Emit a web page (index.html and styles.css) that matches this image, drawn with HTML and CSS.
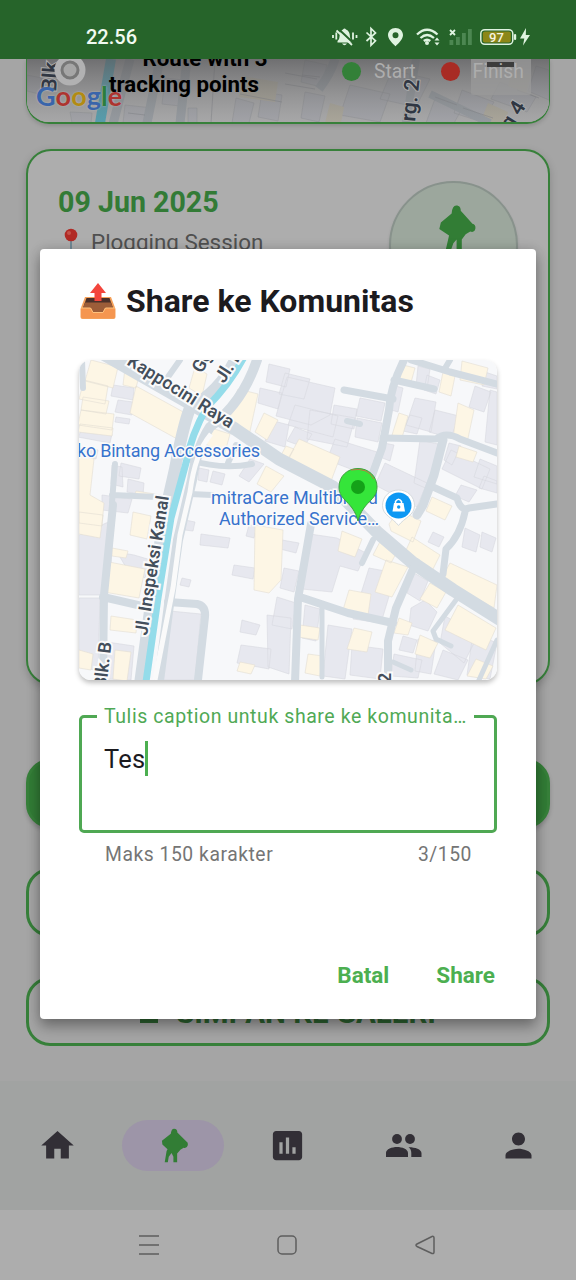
FILE: index.html
```html
<!DOCTYPE html>
<html lang="id">
<head>
<meta charset="utf-8">
<title>Share ke Komunitas</title>
<link rel="stylesheet" href="styles.css">
</head>
<body>
<div class="screen">
  <header class="status">
    <span class="clock">22.56</span>
    <svg class="status-icons" viewBox="330 24 204 28">
      <g fill="#dff3e0" stroke="none">
        <path d="M337.500 42.500V41q2-1.500 2-4 0-6 3.500-7.500 1.500-2 3 0 4 1.500 4 7.500 0 3 2 4v1.500zM342 43.500h5q-2.500 3.500-5 0z"/>
        <path d="M395.500 28c-4.500 0-7.500 3.200-7.500 7.300 0 4.700 7.500 10.900 7.500 10.900s7.500-6.200 7.500-10.900c0-4.100-3-7.300-7.500-7.300zm0 10.200a3 3 0 1 1 0-6 3 3 0 0 1 0 6z" fill-rule="evenodd"/>
        <circle cx="427" cy="43" r="2"/>
        <path d="M434.500 40.500h5l-2.500-3zM434.500 42.500h5l-2.500 3z"/>
        <path d="M526 28l-6 10.500h4.300l-1.300 7 7-10.500h-4.200z"/>
        <rect x="514" y="34" width="2.200" height="6" rx="1"/>
      </g>
      <path d="M338.500 29l16 15" stroke="#26642a" stroke-width="2"/>
      <g fill="none" stroke="#dff3e0" stroke-width="1.800">
        <path d="M336.500 30.500l15.500 14.500M333 35v3M336.300 32.500v7M353 32.500v7M356.500 35v3"/>
        <path d="M366.500 32.500l9 8.300-4.500 4.500V28.500l4.500 4.500-9 8" stroke-width="1.700"/>
        <path d="M417 34.500q10-9.500 20.500 0M420.500 38q6.500-6 13.500 0M423.800 41q3.200-2.600 6.500 0" stroke-width="2.300"/>
        <path d="M450 30l5 5M455 30l-5 5"/>
      </g>
      <g fill="#4c8751"><rect x="449.500" y="40" width="3.800" height="5"/><rect x="456" y="37" width="3.800" height="8"/><rect x="462" y="33" width="3.800" height="12"/><rect x="468" y="29" width="3.800" height="16"/></g>
      <rect x="480.800" y="29.700" width="32" height="14.600" rx="4" fill="#26642a" stroke="#dff3e0" stroke-width="1.500"/>
      <rect x="482.800" y="31.500" width="28" height="11" rx="2" fill="#8c8718"/>
      <text x="496.500" y="41.700" class="battery">97</text>
    </svg>
  </header>

  <main class="content">
    <section class="route-card">
      <svg class="route-map" viewBox="27 59 522 64">
        <defs><linearGradient id="shade" x1="0" y1="0" x2="0" y2="1"><stop offset="0" stop-color="#5c5c5e" stop-opacity=".75"/><stop offset="1" stop-color="#777" stop-opacity="0"/></linearGradient></defs>
        <rect x="26" y="59" width="524" height="65" fill="#a8a8a9"/>
        <g fill="#a2a3a8" stroke="#929397" stroke-width=".6">
          <path d="M27 75l15 3-3 16-12-3zM70 112l22 1-1 10H72zM125 105l28 3-2 15h-28zM165 78l18 2-3 26-18-2zM188 108h9v15h-9zM236 98l18 5-5 20h-17zM262 92l20 3-4 26-20-4zM305 60l22 5-6 22-20-5zM305 92l20 4-6 26-18-4zM350 85l40 9-10 28-40-7zM392 70l38 9-14 28-36-8zM436 96l27 11-9 16h-28zM462 90l32 12-12 20-28-9zM500 82l36 15-9 15-36-13zM536 66l13 4v30l-21-9z"/>
        </g>
        <g fill="#aaa69a"><path d="M242 76l36 6-3 20-36-5zM330 103l14 4-3 16h-16zM512 70l19 5-5 18-18-7zM488 103l20 9-3 11h-25z"/></g>
        <g fill="none" stroke="#959a9f" stroke-width="9"><path d="M130 59l-17 65M335 59q-4 14-16 30M160 59l-13 64M187 59l-7 64" /><path d="M416 59l-10 64M430 94l60 29" stroke-width="8"/></g>
        <path d="M111 59l-11 64" stroke="#559dad" stroke-width="10"/>
        <g fill="none" stroke="#85878b" stroke-width=".6"><path d="M215 59l-4 64M240 94l42 8M285 73l32 6M285 84l30 5M128 113l17 2M302 75l18 2M435 97l22 8M463 108l30 10M517 90l22 8"/></g>
        <rect x="26" y="59" width="524" height="65" fill="url(#shade)"/>
        <g class="road-dim"><text transform="translate(56 92) rotate(-86)">Blk</text><text transform="translate(415 122) rotate(-84)">rg. 2</text><text transform="translate(511 131) rotate(-58)">g 4</text></g>
        <circle cx="70" cy="70" r="15.500" fill="#b1b1b2"/><circle cx="70" cy="70" r="8" fill="#a6a6a6" stroke="#777" stroke-width="3"/>
        <rect x="471" y="40" width="60" height="55" rx="2" fill="#9a9a9a" opacity=".75"/><rect x="487" y="62" width="27" height="5" fill="#3c3c3c"/>
      </svg>
      <div class="google"><span class="gb">G</span><span class="gr">o</span><span class="gy">o</span><span class="gb">g</span><span class="gg">l</span><span class="gr">e</span></div>
      <p class="route-title"><span>Route with 3</span><br>tracking points</p>
      <div class="legend"><i class="dot start"></i><span>Start</span><i class="dot finish"></i><span>Finish</span></div>
    </section>

    <section class="session-card">
      <div class="session-head">
        <div class="session-copy">
          <h2>09 Jun 2025</h2>
          <p><svg class="tack" viewBox="0 0 14 24"><path d="M6.200 10h1.600v13H6.200z" fill="#638090"/><circle cx="7" cy="7" r="6.300" fill="#b12a25"/><circle cx="5" cy="5" r="2" fill="#c4524a"/></svg><span>Plogging Session</span></p>
        </div>
        <div class="avatar"><svg viewBox="0 0 30 36"><path d="M14 0c2.500 0 3.600 1.700 3.500 4l9 10q2.500.500 2.300 3.500-.5 3.500-4 2.500l-3.500 2-3 4V36h-4V26l-2.500 3-2.500 7H5.500L8.500 23 1 18l1.200-5 8.300-7Q11 0 14 0z"/></svg></div>
      </div>
    </section>

    <div class="actions">
      <div class="button solid"></div>
      <div class="button"></div>
      <div class="button last"><i class="save"></i><span>SIMPAN KE GALERI</span></div>
    </div>
  </main>

  <nav class="tabs">
    <div class="tab"><svg viewBox="0 0 24 24"><path d="M10 20v-6h4v6h5v-8h3L12 3 2 12h3v8z"/></svg></div>
    <div class="tab active"><svg class="runner" viewBox="0 0 30 36"><path d="M14 0c2.500 0 3.600 1.700 3.500 4l10 10q1.500.500 1.300 3.500-1 4-4.500 3l-3.500 2-3.500 4V36h-4V30l-2-4-3 4-1 6H4L6 24 7 22 1.500 17 1 13l9.500-7.500Q11 0 14 0z"/></svg></div>
    <div class="tab"><svg viewBox="0 0 24 24"><path d="M19 3H5c-1.100 0-2 .9-2 2v14c0 1.100.9 2 2 2h14c1.100 0 2-.9 2-2V5c0-1.100-.9-2-2-2zM9 17H7v-7h2v7zm4 0h-2V7h2v10zm4 0h-2v-4h2v4z"/></svg></div>
    <div class="tab"><svg viewBox="0 0 39 39"><circle cx="13" cy="13" r="4.900"/><circle cx="26" cy="13" r="4.900"/><path d="M2 31v-4c0-4 6-6 11-6s11 2 11 6v4zM25 21.300c6 0 12.500 2 12.500 6V31H27.300v-4c0-2.500-1-4.500-2.800-5.700z"/></svg></div>
    <div class="tab"><svg viewBox="0 0 24 24"><path d="M12 12c2.210 0 4-1.790 4-4s-1.790-4-4-4-4 1.790-4 4 1.790 4 4 4zm0 2c-2.670 0-8 1.340-8 4v2h16v-2c0-2.660-5.330-4-8-4z"/></svg></div>
  </nav>
  <footer class="system">
    <svg viewBox="0 0 22 22"><path d="M1 2h20M1 11h20M1 20h20"/></svg>
    <svg viewBox="0 0 22 22"><rect x="2" y="2" width="18" height="18" rx="4"/></svg>
    <svg viewBox="0 0 22 22"><path d="M18 2.500q2-.700 2 1.500v14q0 2-2 1.500l-15-7q-2-1.500 0-2.500z"/></svg>
  </footer>

  <div class="dialog" role="dialog">
    <h1><svg viewBox="0 0 36 36"><path d="M5 14h26l4.500 12v8q0 2-2 2h-31q-2 0-2-2v-8z" fill="#f5a15a"/><path d="M6.500 15h23l3.500 10H3z" fill="#4a302a"/><path d="M5 19.500h26l2 5.500h-8l-2 4H13l-2-4H3z" fill="#9c5d39"/><path d="M1 25h9.500l2.500 4.500h10l2.500-4.500H35v8.500q0 1.500-1.500 1.500h-31Q1 35 1 33.500z" fill="#f59650"/><path d="M1 25h9.500l2.500 4.500h10l2.500-4.500H35" fill="none" stroke="#ffc27d"/><path d="M18 0l8 10h-4.500v8h-7v-8H10z" fill="#f3453c"/></svg><span>Share ke Komunitas</span></h1>

    <div class="map-card">
      <svg viewBox="79 360 418 320">
        <rect x="79" y="360" width="418" height="320" fill="#f7f8fa"/>
        <g class="lilac">
          <path d="M113 385l21 3-1 12-22-4zM118 400l15 2-1 13-17-3zM116 417l14 2-1 5-14-2zM165 411l12 4-2 13-17-6zM82 429l30 5-2 9-32-6zM84 447l14 3-2 9-14-3zM121 463l20 5-2 11-20-3zM112 465l10 2 1 20-12-3zM128 479l16 4-1 12-16-3zM102 495l30 4-4 14-26-3z"/>
          <path d="M79 535l34-15-3 70-5 5H79zM79 598h21l-2 74-19-8zM117 552l17 3 17 5-6 18-18-9zM107 642l27 4-3 34-27-1zM170 611l31 3-6 66h-35zM185 520l10 2-2 9-8-1zM201 534l29 4-2 10-28-3zM234 565l21 3-2 11-21-4zM182 578l9 2-2 7-9-2zM249 525l8 1-3 12-8-2z"/>
          <path d="M199 468l10 2-2 12-9-2zM213 471l12 3-3 11-12-3zM250 459l14 5-15 18-10-6z"/>
          <path d="M269 364l21 5-4 18-20-5zM260 388l22 5-4 16-20-6zM285 373l25 6-6 20-25-5zM287 377l48 11-5 27-19 10-35-9zM270 420l19 5-4 22-20-6zM295 405l43 11-5 21-45-12zM310 410l45 8-8 29-40-8zM334 405l23 4-3 20-23-5zM360 398l25 5-4 18-25-5zM357 418l25 5-4 19-23-5zM335 439l42 13-8 24-42-16zM295 427l17 7-8 13-17-6z"/>
          <path d="M418 366l12 3-3 20-11-3zM427 375l13 5-4 14-12-4zM475 386l16 6-7 20-15-5zM485 372l12 4v13l-15-3zM392 385l11 3-5 24-10-3zM415 398l21 4-5 30-25-7zM410 415l12 3-5 16-14-3zM435 410l24 6-8 22-22-6zM490 390l7 2v53l-12-3zM384 443l10 2-4 16-10-4zM420 440l18 4-8 46-16-7zM385 463l42 20-10 24-42-22zM449 443l12 3-9 19-8-5zM451 450l39 19-8 20-40-20zM480 459l17 7v18l-23-7zM461 485l16 5-8 12-14-6zM484 476l13 5v12l-18-5z"/>
          <path d="M310 534l27 4 29 15-8 18-18-5-8 26-30-3zM369 568l27 5-15 50-28-4zM282 540l17 3-3 10-16-4zM284 568l15 3-5 21-14-4zM277 597l19 6-4 26-20-4zM267 615l24 3-2 56-21-7zM242 620l18 5-4 10-16-3zM241 645l30 4-2 20-32-6zM305 605l15 4-4 32-14-3zM328 625l24 4-7 50-22-3zM352 645l31 4-3 30-30-4zM414 573l14 8-8 20-13-8zM411 608l14-8 12 12-9 19-19-6zM403 636l14 4-4 13-14-3zM394 654l28 6-4 18-27-2zM445 616l33 19-14 28-24-20zM443 650l25 10-10 20-24-6zM473 633l24 10-7 36-23-4zM465 528l15 7-4 17-14-5zM482 532l14 6-4 14-12-5zM433 532l11 5-5 10-11-5zM418 639l18 2-5 33-16-3z"/>
        </g>
        <g class="cream">
          <path d="M91 360l27 7-5 21-28-7zM84 380l24 6-3 18-26-5zM83 397l26 4-3 13-25-4zM81 410l33 4-2 16-34-5zM80 424l33 4-1 8-34-4zM125 368l15 4-4 16-13-3zM136 386l51 28-8 26-49-27zM195 367l12 7-5 22-13-8zM238 389l20 5-9 42-25-11zM264 413l14 7-11 20-12-8zM208 427l22 7-6 22-21-14zM79 455l15 4-4 36 14 8-2 23-23-3zM136 491l19 3v4l-20-3zM266 466l18 10-13 16-14-8zM109 562l36 7-6 29-35-6zM112 548l16 3-2 7-14-2zM133 512l18 4-4 23-17-4zM79 512l24 3-3 23-21-4zM111 616l26 4-1 13-26-3zM115 650l16 2-4 29-14-2zM79 650l14 4-2 16-12-2z"/>
          <path d="M299 439l41 18-10 27-46-18zM286 446l8 3-6 11-8-3zM399 364l16 4-5 18-14-4zM399 413l9 3-6 22-10-3zM458 403l16 7-7 33-14-5zM443 372l12 4-4 20-12-4zM462 361l26 7-4 17-24-5zM459 446l18 6-4 10-17-5zM432 497l20 9-7 14-19-9zM255 525l28 5-2 50-12 13-15-3zM342 531l20 8-7 18-17-6zM383 536l17 10-9 17-18-8zM386 560l22 7-16 30-17-5zM349 590l22 4-3 21-25-5zM389 524l10-14 22 11-8 21-22-11zM412 537l28 18-8 16-30-12zM450 563l47 22-3 23-53-29zM430 583l16 9-9 16-17-9zM458 605l38 23-10 22-41-20zM300 625l20 3-2 12-20-3zM354 628l18 4-5 20-20-3zM399 618l13 5-4 12-14-2zM420 635l18 8-8 15-15-4zM308 654l15 2-3 20-15-3zM240 662l15 3-4 9-14-3zM476 659l17 7-7 13-19-3z"/>
        </g>
        <g class="roads">
          <path d="M70 335l165 94 44 30 54 28 45 46 35 30 40 27 56 35" stroke-width="13"/>
          <path d="M235 360q-14 30-45 48-7 18-15 61l-10 44-12 76-13 95" stroke-width="12"/>
          <path d="M257 360q-15 44-47 67-13 20-18 53l-14 60-8 57-11 84" stroke-width="10"/>
          <path d="M404 360q-14 28-15 50l-7 38-12 33-14 20" stroke-width="8"/>
          <path d="M344 390l49 9M394 380l40 9M411 360l39 12 47 12M383 438l53 1q10-8 24 0l37 14" stroke-width="7"/>
          <path d="M443 440l-9 35-11 30-6 10" stroke-width="9"/>
          <path d="M433 487l24 11q4 14 12 10l28-4M465 512q-5 24-19 37l-3 25" stroke-width="7"/>
          <path d="M311 524l-13 75-3 83M300 597l48 16 45 10M416 562l-20 46-8 33v40" stroke-width="8"/>
          <path d="M322 607v70M456 600l-23 31 3 8 15 7M393 662l18 8M497 640l-18 40" stroke-width="5"/>
          <path d="M113 505l-9 90-1 85M103 597l39 9M168 602l29 2q9 2 8 13l-7 63" stroke-width="8"/>
          <path d="M115 464l-3 38M112 495l46 2M190 460q32 10 62 4M190 494l22 1M236 445l-8 18" stroke-width="6"/>
          <path d="M82 360l1 28M180 360l-17 24M450 360l-6 10M347 421l13 3M373 540l-11 23" stroke-width="6"/>
        </g>
        <path d="M211 434q-16 19-21 58l-10 43-7 53-18 92" fill="none" stroke="#fafafa" stroke-width="5"/>
        <path d="M244 357q-14 27-37 50-16 28-21 56l-15 55-13 80-12 84" fill="none" stroke="#94dcea" stroke-width="7"/>
        <g class="blue-label">
          <text x="77" y="457" textLength="183">ko Bintang Accessories</text>
          <text x="211" y="504" textLength="167">mitraCare Multibrand</text>
          <text x="219" y="525" textLength="160">Authorized Service…</text>
        </g>
        <g class="road-label">
          <text transform="translate(126 364) rotate(32)" textLength="122">Kappocini Raya</text>
          <text transform="translate(202 374) rotate(-62)">Gg</text>
          <text transform="translate(224 384) rotate(-57)">Jl. In</text>
          <text transform="translate(147 636) rotate(-81)" textLength="141">Jl. Inspeksi Kanal</text>
          <text transform="translate(106 689) rotate(-83)">Blk. B</text>
          <text transform="translate(391 683) rotate(-90)">2</text>
        </g>
        <path d="M358 468.500c-10.500 0-19 7.500-19 18.500 0 14 14 14 19 34 5-20 19-20 19-34 0-11-8.500-18.500-19-18.500z" fill="#35e53a" stroke="#3e9f3e"/>
        <path d="M351 470q17-3 23 9" fill="none" stroke="#b97b45"/>
        <circle cx="358" cy="487" r="7" fill="#14a118"/>
        <path d="M398.500 490c-9 0-16 6.500-16 15.500 0 10 10 12 16 20 6-8 16-10 16-20 0-9-7-15.500-16-15.500z" fill="#fff" stroke="#d5dadd"/>
        <circle cx="398.500" cy="505.500" r="13" fill="#0d98f3"/>
        <path d="M394 503h9.500l1.500 8.500h-12.500z" fill="#fff"/><path d="M395.500 503.500v-2q3-4.500 6 0v2" fill="none" stroke="#fff" stroke-width="1.500"/><circle cx="398.700" cy="507" r="1.700" fill="#0d98f3"/>
      </svg>
    </div>

    <fieldset class="caption-field">
      <legend>Tulis caption untuk share ke komunita…</legend>
      <span class="value">Tes</span><i class="caret"></i>
    </fieldset>
    <div class="helper"><span>Maks 150 karakter</span><span>3/150</span></div>
    <div class="dialog-actions"><span>Batal</span><span>Share</span></div>
  </div>
</div>
</body>
</html>
```
FILE: styles.css
```css
* { box-sizing: border-box; }
body { margin: 0; font-family: Roboto, "Liberation Sans", sans-serif; }
h1, h2, p { margin: 0; }
svg { display: block; flex: none; }
.screen { position: relative; width: 576px; height: 1280px; display: flex; flex-direction: column; background: #a5a5a5; overflow: hidden; }

.status { height: 59px; flex: none; background: #26642a; display: flex; justify-content: space-between; align-items: flex-start; padding: 24px 42px 0 86px; }
.clock { color: #f1faf1; font-size: 20px; line-height: 27px; font-weight: 500; }
.status-icons { width: 204px; height: 28px; }
.battery { font: 500 13px Roboto, sans-serif; fill: #f5f5e0; text-anchor: middle; }

.content { height: 1022px; flex: none; overflow: hidden; padding: 0 26px; }
.route-card { position: relative; height: 65px; border: 1.500px solid #37803a; border-bottom-width: 2px; border-top: 0; border-radius: 0 0 23px 23px; overflow: hidden; box-shadow: 0 2px 4px rgba(0,0,0,.15); }
.route-map { width: 522px; height: 64px; }
.road-dim { font: 600 21px Roboto, sans-serif; fill: #303743; stroke: #aaa; stroke-width: 2px; paint-order: stroke; }
.google { position: absolute; left: 9px; top: 20px; font: 700 27px/34px Lato, sans-serif; letter-spacing: .1px; text-shadow: 0 0 2px #bbb; }
.gb { color: #3a65aa; } .gr { color: #ad3430; } .gy { color: #b28b13; } .gg { color: #2b7e3c; }
.route-title { position: absolute; left: 72px; top: -14px; width: 170px; text-align: center; font-size: 22.300px; line-height: 26px; font-weight: 700; color: #000; white-space: nowrap; }
.route-title span { padding-left: 42px; }
.legend { position: absolute; left: 315px; top: 1px; display: flex; align-items: center; height: 22px; font-size: 19.300px; color: #adadad; }
.dot { width: 19px; height: 19px; border-radius: 50%; }
.legend span { margin-left: 13px; }
.start { background: #338038; }
.finish { background: #a82b24; margin-left: 25px; }

.session-card { margin-top: 25px; height: 536px; border: 2px solid #37803a; border-radius: 25px; background: #adadad; box-shadow: 0 3px 8px rgba(0,0,0,.18); padding: 30px; }
.session-head { display: flex; justify-content: space-between; }
.session-copy { padding-top: 3px; }
.session-head h2 { color: #337b36; font-size: 28.600px; line-height: 36px; font-weight: 700; }
.session-head p { display: flex; align-items: flex-start; margin-top: 8px; color: #505050; font-size: 22.400px; line-height: 28px; }
.tack { width: 14px; height: 24px; margin: 0 13px 0 6px; }
.avatar { width: 129px; height: 129px; border-radius: 50%; background: #9ca79d; border: 2px solid #88928c; display: flex; justify-content: center; padding: 21px 0 0 7px; box-shadow: 0 2px 3px rgba(0,0,0,.12); }
.avatar svg { width: 39px; height: 50px; fill: #327d35; }

.actions { display: flex; flex-direction: column; gap: 40px; margin-top: 74px; }
.button { height: 69px; border: 3px solid #37803a; border-radius: 24px; display: flex; justify-content: center; align-items: center; gap: 18px; color: #2d6330; font-weight: 700; font-size: 29.500px; line-height: 30px; }
.button.last { padding-top: 2px; }
.button.solid { background: #327c36; box-shadow: 0 3px 4px rgba(0,0,0,.18); }
.save { width: 18px; height: 20px; background: #2d6330; }

.tabs { height: 129px; flex: none; background: #a1a3a2; display: grid; grid-template-columns: repeat(5, 1fr); }
.tab { display: flex; justify-content: center; align-items: center; height: 51px; margin: 39px 6.500px 0; border-radius: 26px; fill: #322f36; }
.tab svg { width: 39px; height: 39px; }
.tab.active { background: #9d95a8; fill: #327d35; padding-left: 5px; }
.tab .runner { width: 28px; height: 35px; }
.system { flex: 1; background: #adadad; display: flex; justify-content: center; align-items: center; gap: 116px; padding-right: 3px; }
.system svg { width: 22px; height: 22px; fill: none; stroke: #5e5e5e; stroke-width: 1.500; }

/* Modal card over the dimmed screen */
.dialog { position: absolute; left: 40px; top: 249px; width: 496px; height: 770px; background: #fff; border-radius: 4px; padding: 32px 39px 0; box-shadow: 0 8px 14px rgba(0,0,0,.3), 0 0 12px rgba(0,0,0,.14); }
.dialog h1 { display: flex; align-items: center; gap: 10px; height: 40px; font-size: 32px; line-height: 40px; font-weight: 700; color: #1c1b1f; white-space: nowrap; padding-left: 1px; }
.dialog h1 svg { width: 36px; height: 36px; }
.map-card { margin-top: 39px; height: 320px; border-radius: 12px; overflow: hidden; box-shadow: 0 3px 5px rgba(0,0,0,.25); }
.map-card svg { width: 418px; height: 320px; }
.lilac { fill: #e7e8ef; stroke: #d6d8df; stroke-width: .6; }
.cream { fill: #fdf6e5; stroke: #e2ddd3; stroke-width: .6; }
.roads { fill: none; stroke: #d3dbe2; stroke-linejoin: round; stroke-linecap: round; }
.road-label { font: 600 18px Roboto, sans-serif; fill: #434e5b; stroke: #fafafa; stroke-width: 4px; paint-order: stroke; }
.blue-label { font: 400 18px Roboto, sans-serif; fill: #3773cd; stroke: #fafafa; stroke-width: 3px; paint-order: stroke; }

.caption-field { margin: 24px 0 0; height: 129px; border: 3px solid #4fa853; border-radius: 5px; padding: 12px 0 0 22px; min-width: 0; display: flex; align-items: flex-start; }
.caption-field legend { margin-left: -7px; padding: 0 7px; font-size: 19.500px; line-height: 25px; letter-spacing: .57px; color: #50a955; white-space: nowrap; }
.value { font-size: 25.500px; line-height: 36px; letter-spacing: .2px; color: #1c1b1f; }
.caret { width: 3px; height: 35px; background: #4caf50; }
.helper { display: flex; justify-content: space-between; padding: 9px 25px 0 26px; font-size: 19.300px; line-height: 26px; letter-spacing: .55px; color: #757575; }
.dialog-actions { display: flex; justify-content: flex-end; gap: 47px; margin-top: 93px; padding-right: 2px; color: #4caf50; font-size: 22.500px; line-height: 28px; font-weight: 700; }
```
